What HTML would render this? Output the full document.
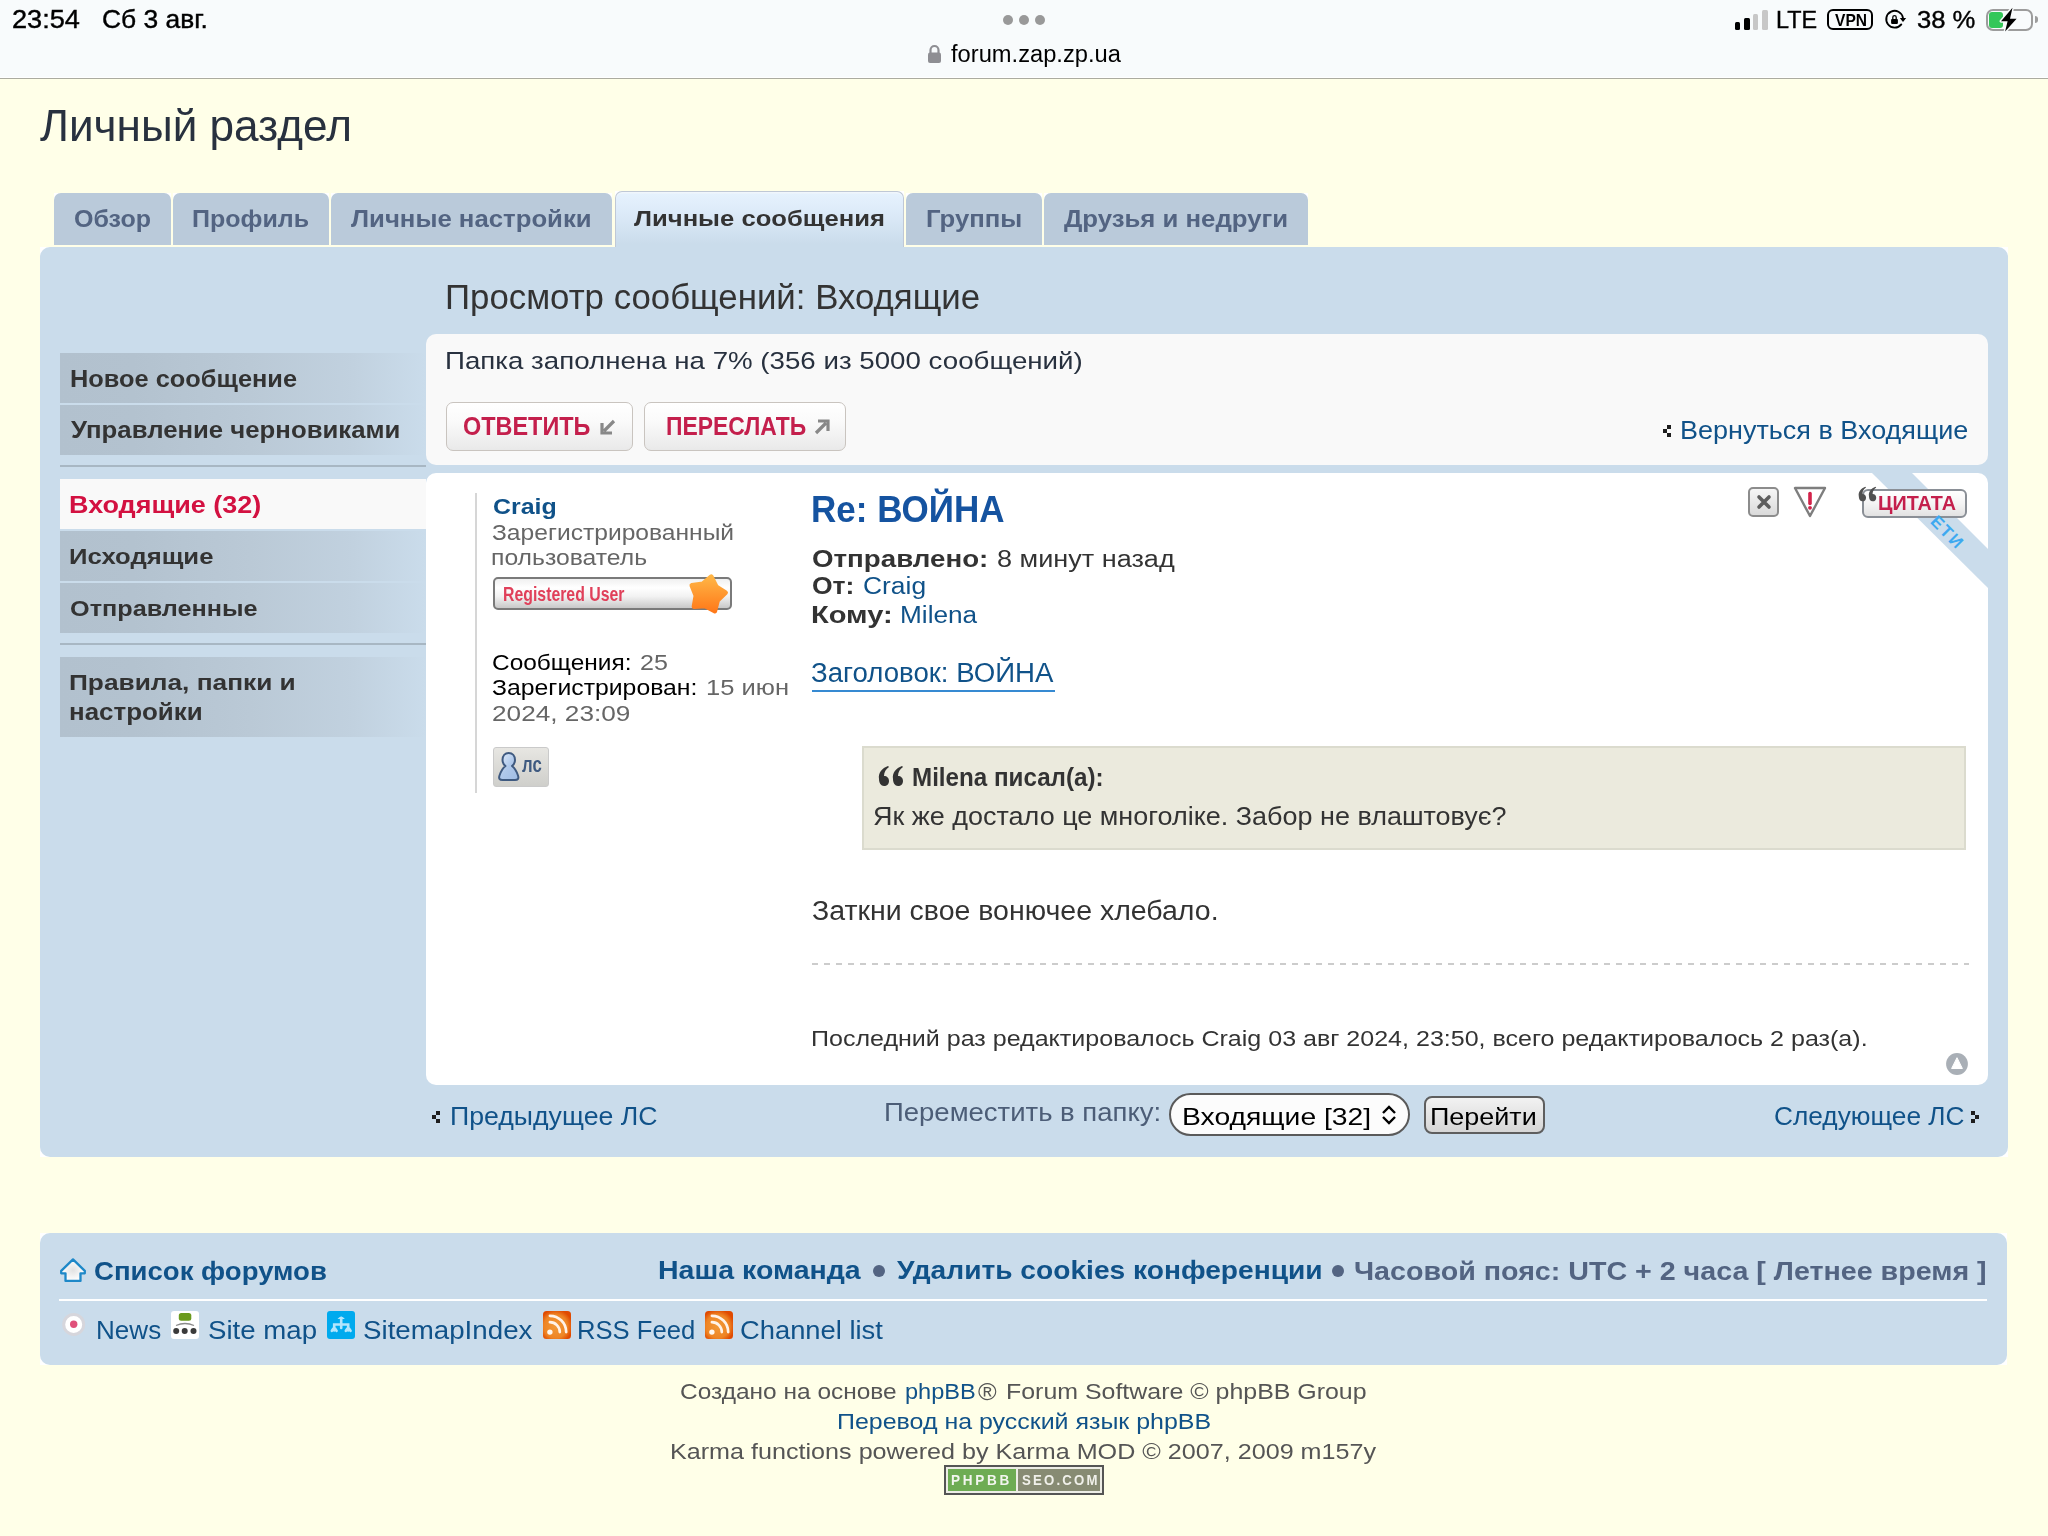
<!DOCTYPE html>
<html><head><meta charset="utf-8"><style>
html,body{margin:0;padding:0;width:2048px;height:1536px;overflow:hidden;background:#FFFFE8;font-family:'Liberation Sans', sans-serif;}
.t{position:absolute;white-space:nowrap;transform-origin:0 0;}
</style></head><body>
<div style="position:absolute;left:0px;top:0px;width:2048px;height:78px;background:#F8FBFC"></div>
<div style="position:absolute;left:0px;top:77px;width:2048px;height:1px;background:#FFFFFF"></div>
<div style="position:absolute;left:0px;top:78px;width:2048px;height:1.3px;background:#ABABA0"></div>
<div style="position:absolute;left:1003px;top:14.7px;width:10px;height:10px;background:#999;border-radius:50%"></div>
<div style="position:absolute;left:1019px;top:14.7px;width:10px;height:10px;background:#999;border-radius:50%"></div>
<div style="position:absolute;left:1035px;top:14.7px;width:10px;height:10px;background:#999;border-radius:50%"></div>
<svg style="position:absolute;left:927px;top:44px" width="15" height="20" viewBox="0 0 15 20"><path d="M3.5 9 V6 a4 4 0 0 1 8 0 V9" fill="none" stroke="#8E8E93" stroke-width="2.2"/><rect x="1" y="8.5" width="13" height="10.5" rx="2" fill="#8E8E93"/></svg>
<div style="position:absolute;left:1735.2px;top:21.6px;width:5.3px;height:8px;background:#000;border-radius:1.5px"></div>
<div style="position:absolute;left:1744.3px;top:18.4px;width:5.3px;height:11.2px;background:#000;border-radius:1.5px"></div>
<div style="position:absolute;left:1753.3px;top:14.1px;width:5.1px;height:15.5px;background:#C7C7C7;border-radius:1.5px"></div>
<div style="position:absolute;left:1762.4px;top:10.4px;width:5.2px;height:19.2px;background:#C7C7C7;border-radius:1.5px"></div>
<div style="position:absolute;left:1827.3px;top:8.8px;width:45.7px;height:21.3px;box-sizing:border-box;border:2.3px solid #000;border-radius:6px"></div>
<svg style="position:absolute;left:1880px;top:6px" width="32" height="28" viewBox="0 0 32 28"><path d="M21.3 18.4 A8.4 8.4 0 1 1 22.9 11.6" fill="none" stroke="#000" stroke-width="1.9" stroke-linecap="round"/><polygon points="19.8,12 26.2,12 23,16" fill="#000"/><rect x="11.1" y="13.1" width="6.8" height="4.8" rx="0.8" fill="#000"/><path d="M12.8 13.3 V11.3 A1.7 1.7 0 0 1 16.2 11.3 V13.3" fill="none" stroke="#000" stroke-width="1.3"/></svg>
<div style="position:absolute;left:1985.8px;top:8.5px;width:46.8px;height:22.5px;box-sizing:border-box;border:2.4px solid #9C9C9C;border-radius:7px"></div>
<div style="position:absolute;left:1989.1px;top:12.2px;width:14.4px;height:15.6px;background:#34C759;border-radius:3px"></div>
<div style="position:absolute;left:2035px;top:16.3px;width:3px;height:7px;background:#9C9C9C;border-radius:0 3px 3px 0"></div>
<svg style="position:absolute;left:1995px;top:4px" width="26" height="32" viewBox="0 0 26 32"><path d="M17.5 3.7 L6 17.2 H12.6 L10.1 27.5 L21.6 14.8 H15 Z" fill="#000" stroke="#F8FBFC" stroke-width="3" stroke-linejoin="round" paint-order="stroke"/></svg>
<div style="position:absolute;left:54px;top:193px;width:6px;height:6px;background:#FFFFFF"></div>
<div style="position:absolute;left:165px;top:193px;width:6px;height:6px;background:#FFFFFF"></div>
<div style="position:absolute;left:54px;top:193px;width:117px;height:52px;background:#BACADA;border-radius:7px 7px 0 0"></div>
<div style="position:absolute;left:173px;top:193px;width:6px;height:6px;background:#FFFFFF"></div>
<div style="position:absolute;left:323px;top:193px;width:6px;height:6px;background:#FFFFFF"></div>
<div style="position:absolute;left:173px;top:193px;width:156px;height:52px;background:#BACADA;border-radius:7px 7px 0 0"></div>
<div style="position:absolute;left:331px;top:193px;width:6px;height:6px;background:#FFFFFF"></div>
<div style="position:absolute;left:606px;top:193px;width:6px;height:6px;background:#FFFFFF"></div>
<div style="position:absolute;left:331px;top:193px;width:281px;height:52px;background:#BACADA;border-radius:7px 7px 0 0"></div>
<div style="position:absolute;left:906px;top:193px;width:6px;height:6px;background:#FFFFFF"></div>
<div style="position:absolute;left:1035.6px;top:193px;width:6px;height:6px;background:#FFFFFF"></div>
<div style="position:absolute;left:906px;top:193px;width:135.5999999999999px;height:52px;background:#BACADA;border-radius:7px 7px 0 0"></div>
<div style="position:absolute;left:1044.3px;top:193px;width:6px;height:6px;background:#FFFFFF"></div>
<div style="position:absolute;left:1301.8px;top:193px;width:6px;height:6px;background:#FFFFFF"></div>
<div style="position:absolute;left:1044.3px;top:193px;width:263.5px;height:52px;background:#BACADA;border-radius:7px 7px 0 0"></div>
<div style="position:absolute;left:614.5px;top:191px;width:7px;height:7px;background:#FFFFFF"></div>
<div style="position:absolute;left:896.5px;top:191px;width:7px;height:7px;background:#FFFFFF"></div>
<div style="position:absolute;left:614.5px;top:191px;width:289px;height:56px;box-sizing:border-box;border:1.5px solid #BFC8D6;border-bottom:none;background:linear-gradient(#E6F2FE,#DCEAF8 40%,#CADCEB 95%);border-radius:7px 7px 0 0;box-shadow:inset 0 1.5px 0 #F0F6FC"></div>
<div style="position:absolute;left:40px;top:247px;width:10px;height:10px;background:#FFFFFF"></div>
<div style="position:absolute;left:1998px;top:247px;width:10px;height:10px;background:#FFFFFF"></div>
<div style="position:absolute;left:40px;top:1147px;width:10px;height:10px;background:#FFFFFF"></div>
<div style="position:absolute;left:1998px;top:1147px;width:10px;height:10px;background:#FFFFFF"></div>
<div style="position:absolute;left:40px;top:247px;width:1968px;height:910px;background:#CADCEB;border-radius:10px"></div>
<div style="position:absolute;left:60px;top:353px;width:366px;height:50px;background:linear-gradient(90deg,#B2C1CE 0%,#B3C2CF 20%,#BAC9D6 52%,#C1D1DF 80%,#CADCEB 100%)"></div>
<div style="position:absolute;left:60px;top:405.2px;width:366px;height:49.80000000000001px;background:linear-gradient(90deg,#B2C1CE 0%,#B3C2CF 20%,#BAC9D6 52%,#C1D1DF 80%,#CADCEB 100%)"></div>
<div style="position:absolute;left:60px;top:465px;width:366px;height:2px;background:#A8B7C3"></div>
<div style="position:absolute;left:60px;top:479px;width:366px;height:50px;background:#F9F9F9"></div>
<div style="position:absolute;left:60px;top:530.8px;width:366px;height:49.90000000000009px;background:linear-gradient(90deg,#B2C1CE 0%,#B3C2CF 20%,#BAC9D6 52%,#C1D1DF 80%,#CADCEB 100%)"></div>
<div style="position:absolute;left:60px;top:582.6px;width:366px;height:50.10000000000002px;background:linear-gradient(90deg,#B2C1CE 0%,#B3C2CF 20%,#BAC9D6 52%,#C1D1DF 80%,#CADCEB 100%)"></div>
<div style="position:absolute;left:60px;top:643px;width:366px;height:2px;background:#A8B7C3"></div>
<div style="position:absolute;left:60px;top:657px;width:366px;height:79.5px;background:linear-gradient(90deg,#B2C1CE 0%,#B3C2CF 20%,#BAC9D6 52%,#C1D1DF 80%,#CADCEB 100%)"></div>
<div style="position:absolute;left:426px;top:334px;width:1562px;height:130.7px;background:#F9F9F9;border-radius:10px"></div>
<div style="position:absolute;left:446.4px;top:401.5px;width:187px;height:49px;box-sizing:border-box;border:1.5px solid #C9C4BF;border-radius:7px;background:linear-gradient(#FFFFFF,#FAFAFA 40%,#E9E9E9)"></div>
<div style="position:absolute;left:644.3px;top:401.5px;width:201.3px;height:49px;box-sizing:border-box;border:1.5px solid #C9C4BF;border-radius:7px;background:linear-gradient(#FFFFFF,#FAFAFA 40%,#E9E9E9)"></div>
<svg style="position:absolute;left:599px;top:418px" width="18" height="18" viewBox="0 0 18 18"><path d="M15 3 L5 13 M3 5 V15 H13" fill="none" stroke="#888" stroke-width="3.2"/></svg>
<svg style="position:absolute;left:813px;top:418px" width="18" height="18" viewBox="0 0 18 18"><path d="M3 15 L13 5 M5 3 H15 V13" fill="none" stroke="#888" stroke-width="3.2"/></svg>
<svg style="position:absolute;left:1663px;top:425px" width="8" height="12" viewBox="0 0 8 12"><rect x="4" y="0" width="4" height="4" fill="#1E1E1E"/><rect x="0" y="4" width="4" height="4" fill="#1E1E1E"/><rect x="4" y="8" width="4" height="4" fill="#1E1E1E"/></svg>
<div style="position:absolute;left:426px;top:473px;width:1562px;height:612.2px;background:#FFFFFF;border-radius:10px"></div>
<div style="position:absolute;left:426px;top:473px;width:1562px;height:612px;border-radius:10px;overflow:hidden"><svg style="position:absolute;left:0;top:0" width="1562" height="200"><polygon points="1446,0 1486,0 1562,76 1562,115" fill="#CADCEB"/></svg></div>
<div style="position:absolute;left:475px;top:493.2px;width:2px;height:299.5px;background:#D6D6D6"></div>
<div style="position:absolute;left:493.4px;top:576.8px;width:238.8px;height:33.5px;box-sizing:border-box;border:2px solid #7A7A7A;border-radius:5px;background:linear-gradient(#F0F0F0,#FFFFFF 30%,#F2F2F2 60%,#C9C9C9)"></div>
<svg style="position:absolute;left:680px;top:568px" width="56" height="52" viewBox="0 0 56 52"><defs><linearGradient id="sg" x1="0" y1="0" x2="0" y2="1"><stop offset="0" stop-color="#FFB545"/><stop offset="1" stop-color="#FF7A1A"/></linearGradient></defs><polygon points="31.3,8.6 36.3,18.6 45.7,24.6 37.7,32.4 34.9,43.2 25.0,38.0 13.9,38.7 15.8,27.7 11.7,17.3 22.7,15.7" fill="url(#sg)" stroke="url(#sg)" stroke-width="4.5" stroke-linejoin="round"/></svg>
<div style="position:absolute;left:493.1px;top:747px;width:55.7px;height:39.8px;box-sizing:border-box;border:1px solid #CACACA;background:linear-gradient(#E7E6E2,#CFCFCB);border-radius:3px"></div>
<svg style="position:absolute;left:496px;top:750px" width="26" height="32" viewBox="0 0 26 32"><defs><linearGradient id="pg" x1="0" y1="0" x2="1" y2="1"><stop offset="0" stop-color="#E6F0FC"/><stop offset="0.5" stop-color="#AFC8EA"/><stop offset="1" stop-color="#9FBCE4"/></linearGradient></defs><path d="M6.5 30 C3.5 30 2.5 28.5 3.5 25.5 C5 21 7.5 17.5 9.5 16 C7.5 14.5 6.5 12.5 6.5 10 C6.5 6 9 3 12.7 3 C16.4 3 19 6 19 10 C19 12.5 18 14.5 16 16 C18 17.5 20.5 21 22 25.5 C23 28.5 22 30 19 30 Z" fill="url(#pg)" stroke="#3F5A80" stroke-width="2" stroke-linejoin="round"/></svg>
<div style="position:absolute;left:1748px;top:486.8px;width:31.3px;height:29.9px;box-sizing:border-box;border:2px solid #8C8C8C;border-radius:5px;background:linear-gradient(#F6F6F6,#DADADA)"></div>
<svg style="position:absolute;left:1755px;top:493px" width="18" height="18" viewBox="0 0 18 18"><path d="M4 4 L14 14 M14 4 L4 14" stroke="#5E5E5E" stroke-width="3.6" stroke-linecap="round"/></svg>
<svg style="position:absolute;left:1792px;top:485px" width="36" height="34" viewBox="0 0 36 34"><path d="M3 3 H33 L18 31 Z" fill="#FFF" stroke="#7E7E7E" stroke-width="2.4" stroke-linejoin="round"/><path d="M18 8.5 V18.5" stroke="#D3224A" stroke-width="3.6" stroke-linecap="round"/><circle cx="18" cy="22.8" r="1.9" fill="#D3224A"/></svg>
<div style="position:absolute;left:1861.9px;top:489.1px;width:105.4px;height:29.3px;box-sizing:border-box;border:2px solid #8A8F96;border-radius:6px;background:linear-gradient(#FFFFFF,#F4F4F4 50%,#E2E2E2)"></div>
<svg style="position:absolute;left:1857px;top:486px" width="21" height="16" viewBox="0 0 28 22"><path d="M11 1 C5 3 1 8 2 14 C2 18 4 21 7 21 C10 21 12 19 12 16 C12 13 10 11 7 11 C7 7 9 4 12 2 Z M25 1 C19 3 15 8 16 14 C16 18 18 21 21 21 C24 21 26 19 26 16 C26 13 24 11 21 11 C21 7 23 4 26 2 Z" fill="#505050"/></svg>
<div style="position:absolute;left:1940px;top:512px;letter-spacing:2px;font:bold 17px 'Liberation Sans';color:#3DA9F0;transform:rotate(45deg);transform-origin:0 0;white-space:nowrap">ЕТИ</div>
<div style="position:absolute;left:812px;top:690px;width:243px;height:2px;background:#368AD2"></div>
<div style="position:absolute;left:862px;top:746px;width:1104px;height:104px;box-sizing:border-box;border:2px solid #DBDBCE;background:#EBEADD"></div>
<svg style="position:absolute;left:877px;top:765px" width="28" height="22" viewBox="0 0 28 22"><path d="M11 1 C5 3 1 8 2 14 C2 18 4 21 7 21 C10 21 12 19 12 16 C12 13 10 11 7 11 C7 7 9 4 12 2 Z M25 1 C19 3 15 8 16 14 C16 18 18 21 21 21 C24 21 26 19 26 16 C26 13 24 11 21 11 C21 7 23 4 26 2 Z" fill="#333"/></svg>
<div style="position:absolute;left:811.5px;top:963px;width:1157px;height:2px;background:repeating-linear-gradient(90deg,#CCCCCC 0 6px,transparent 6px 12px)"></div>
<svg style="position:absolute;left:1946px;top:1053px" width="22" height="22" viewBox="0 0 22 22"><circle cx="11" cy="11" r="10.9" fill="#A9AFB6"/><path d="M11 4.7 L5.6 15.5 H16.4 Z" fill="#FFF" stroke="#FFF" stroke-width="1" stroke-linejoin="round"/></svg>
<svg style="position:absolute;left:432px;top:1111.3px" width="8" height="12" viewBox="0 0 8 12"><rect x="4" y="0" width="4" height="4" fill="#1E1E1E"/><rect x="0" y="4" width="4" height="4" fill="#1E1E1E"/><rect x="4" y="8" width="4" height="4" fill="#1E1E1E"/></svg>
<div style="position:absolute;left:1169.4px;top:1093.4px;width:241px;height:43px;box-sizing:border-box;border:2px solid #5A5A5A;border-radius:22px;background:#FCFCFC"></div>
<svg style="position:absolute;left:1380px;top:1105px" width="18" height="20" viewBox="0 0 18 20"><path d="M3 8 L9 2 L15 8 M3 12 L9 18 L15 12" fill="none" stroke="#000" stroke-width="2.4"/></svg>
<div style="position:absolute;left:1424.3px;top:1095.8px;width:120.6px;height:38.7px;box-sizing:border-box;border:2px solid #5E5E5E;border-radius:8px;background:linear-gradient(#F2F2F2,#D6D6D6)"></div>
<svg style="position:absolute;left:1971px;top:1111px" width="8" height="12" viewBox="0 0 8 12"><rect x="0" y="0" width="4" height="4" fill="#1E1E1E"/><rect x="4" y="4" width="4" height="4" fill="#1E1E1E"/><rect x="0" y="8" width="4" height="4" fill="#1E1E1E"/></svg>
<div style="position:absolute;left:40px;top:1233.2px;width:10px;height:10px;background:#FFFFFF"></div>
<div style="position:absolute;left:1997px;top:1233.2px;width:10px;height:10px;background:#FFFFFF"></div>
<div style="position:absolute;left:40px;top:1355.0px;width:10px;height:10px;background:#FFFFFF"></div>
<div style="position:absolute;left:1997px;top:1355.0px;width:10px;height:10px;background:#FFFFFF"></div>
<div style="position:absolute;left:40px;top:1233.2px;width:1967px;height:131.8px;background:#CADCEB;border-radius:10px"></div>
<svg style="position:absolute;left:59px;top:1257px" width="28" height="26" viewBox="0 0 28 26"><defs><radialGradient id="hg" cx="0.5" cy="0.5" r="0.5"><stop offset="0" stop-color="#E2E2E2"/><stop offset="1" stop-color="#FFFFFF"/></radialGradient></defs><path d="M14 2.4 L2.2 13.8 V16.3 H6.5 V23.9 H21.5 V16.3 H25.8 V13.8 Z" fill="url(#hg)" stroke="#1E88C8" stroke-width="2.3" stroke-linejoin="round"/></svg>
<div style="position:absolute;left:873.1px;top:1265.2px;width:11.8px;height:11.8px;background:#536482;border-radius:50%"></div>
<div style="position:absolute;left:1332px;top:1265.2px;width:11.8px;height:11.8px;background:#536482;border-radius:50%"></div>
<div style="position:absolute;left:59.3px;top:1299px;width:1927.6px;height:2px;background:#FFFFFF"></div>
<svg style="position:absolute;left:61px;top:1312px" width="26" height="26" viewBox="0 0 26 26"><circle cx="12.7" cy="12.4" r="10" fill="#FFFFFF" stroke="#D6D6DC" stroke-width="3"/><circle cx="12.7" cy="12.2" r="3.7" fill="#E0507A"/></svg>
<svg style="position:absolute;left:171px;top:1311px" width="28" height="28" viewBox="0 0 28 28"><rect x="0" y="0" width="28" height="28" rx="3" fill="#FFFFFF"/><rect x="7.8" y="2" width="12.5" height="7.8" rx="2.5" fill="#6A9A1E"/><path d="M5 14.5 Q14 10.5 23 14.5" stroke="#8A8A8A" stroke-width="1.3" fill="none"/><circle cx="5.2" cy="20" r="3" fill="#3A3A3A"/><circle cx="13.7" cy="20" r="3" fill="#3A3A3A"/><circle cx="22.5" cy="20" r="3" fill="#3A3A3A"/></svg>
<svg style="position:absolute;left:327px;top:1311px" width="28" height="28" viewBox="0 0 28 28"><rect x="0" y="0" width="28" height="28" rx="3" fill="#00AAEE"/><g stroke="#B3E5FC" stroke-width="2.6" fill="none" stroke-linecap="round"><path d="M14.2 7 V17"/><path d="M7.2 19.5 V13.5 H21.2 V19.5"/><path d="M4.8 19.8 Q7.2 15 9.6 19.8"/><path d="M18.8 19.8 Q21.2 15 23.6 19.8"/></g><path d="M10.5 8 Q14.2 3 17.9 8 Z" fill="#B3E5FC"/></svg>
<svg style="position:absolute;left:543px;top:1311px" width="28" height="28" viewBox="0 0 28 28"><defs><radialGradient id="rg543" cx="0.45" cy="0.55" r="0.6"><stop offset="0" stop-color="#F29A38"/><stop offset="0.7" stop-color="#EE8424"/><stop offset="1" stop-color="#E04A00"/></radialGradient></defs><rect x="0" y="0" width="28" height="28" rx="3.5" fill="url(#rg543)"/><circle cx="6.9" cy="21.1" r="2.7" fill="#FFF8F0"/><path d="M6.9 11.2 A9.9 9.9 0 0 1 16.8 21.1" fill="none" stroke="#FFF3E8" stroke-width="2.7" stroke-linecap="round"/><path d="M6.9 4.8 A16.3 16.3 0 0 1 23.2 21.1" fill="none" stroke="#FFF3E8" stroke-width="2.7" stroke-linecap="round"/></svg>
<svg style="position:absolute;left:705px;top:1311px" width="28" height="28" viewBox="0 0 28 28"><defs><radialGradient id="rg705" cx="0.45" cy="0.55" r="0.6"><stop offset="0" stop-color="#F29A38"/><stop offset="0.7" stop-color="#EE8424"/><stop offset="1" stop-color="#E04A00"/></radialGradient></defs><rect x="0" y="0" width="28" height="28" rx="3.5" fill="url(#rg705)"/><circle cx="6.9" cy="21.1" r="2.7" fill="#FFF8F0"/><path d="M6.9 11.2 A9.9 9.9 0 0 1 16.8 21.1" fill="none" stroke="#FFF3E8" stroke-width="2.7" stroke-linecap="round"/><path d="M6.9 4.8 A16.3 16.3 0 0 1 23.2 21.1" fill="none" stroke="#FFF3E8" stroke-width="2.7" stroke-linecap="round"/></svg>
<div style="position:absolute;left:944.2px;top:1465.1px;width:159.7px;height:29.6px;box-sizing:border-box;border:2px solid #555555;background:#EDEDE6"></div>
<div style="position:absolute;left:948.3px;top:1469.1px;width:67.7px;height:21.6px;background:#6EAC53"></div>
<div style="position:absolute;left:1018.4px;top:1469.1px;width:81.4px;height:21.6px;background:#878B73"></div>
<div class="t" style="left:12.03px;top:7.14px;font-size:25.00px;line-height:25.00px;font-weight:normal;color:#000;transform:scaleX(1.0861);letter-spacing:0px;-webkit-text-stroke:0.4px #000;">23:54</div>
<div class="t" style="left:101.76px;top:7.14px;font-size:25.00px;line-height:25.00px;font-weight:normal;color:#000;transform:scaleX(1.0553);letter-spacing:0px;-webkit-text-stroke:0.4px #000;">Сб 3 авг.</div>
<div class="t" style="left:951.40px;top:41.64px;font-size:24.29px;line-height:24.29px;font-weight:normal;color:#000;transform:scaleX(0.9759);letter-spacing:0px;">forum.zap.zp.ua</div>
<div class="t" style="left:1775.88px;top:7.54px;font-size:24.29px;line-height:24.29px;font-weight:normal;color:#000;transform:scaleX(0.9618);letter-spacing:0px;-webkit-text-stroke:0.4px #000;">LTE</div>
<div class="t" style="left:1834.50px;top:11.59px;font-size:16.43px;line-height:16.43px;font-weight:bold;color:#000;transform:scaleX(0.9481);letter-spacing:0px;">VPN</div>
<div class="t" style="left:1917.00px;top:7.54px;font-size:24.29px;line-height:24.29px;font-weight:normal;color:#000;transform:scaleX(1.0543);letter-spacing:0px;-webkit-text-stroke:0.4px #000;">38 %</div>
<div class="t" style="left:40.40px;top:103.07px;font-size:45.28px;line-height:45.28px;font-weight:normal;color:#28313F;transform:scaleX(0.9745);letter-spacing:0px;">Личный раздел</div>
<div class="t" style="left:74.22px;top:207.61px;font-size:23.14px;line-height:23.14px;font-weight:bold;color:#536482;transform:scaleX(1.0816);letter-spacing:0px;">Обзор</div>
<div class="t" style="left:192.44px;top:207.61px;font-size:23.14px;line-height:23.14px;font-weight:bold;color:#536482;transform:scaleX(1.0819);letter-spacing:0px;">Профиль</div>
<div class="t" style="left:351.00px;top:207.61px;font-size:23.14px;line-height:23.14px;font-weight:bold;color:#536482;transform:scaleX(1.1134);letter-spacing:0px;">Личные настройки</div>
<div class="t" style="left:925.79px;top:207.61px;font-size:23.14px;line-height:23.14px;font-weight:bold;color:#536482;transform:scaleX(1.1109);letter-spacing:0px;">Группы</div>
<div class="t" style="left:1064.30px;top:207.61px;font-size:23.14px;line-height:23.14px;font-weight:bold;color:#536482;transform:scaleX(1.1139);letter-spacing:0px;">Друзья и недруги</div>
<div class="t" style="left:633.50px;top:207.94px;font-size:22.29px;line-height:22.29px;font-weight:bold;color:#333333;transform:scaleX(1.1506);letter-spacing:0px;">Личные сообщения</div>
<div class="t" style="left:444.88px;top:279.44px;font-size:35.28px;line-height:35.28px;font-weight:normal;color:#333333;transform:scaleX(0.9870);letter-spacing:0px;">Просмотр сообщений: Входящие</div>
<div class="t" style="left:69.81px;top:367.61px;font-size:23.14px;line-height:23.14px;font-weight:bold;color:#333333;transform:scaleX(1.0970);letter-spacing:0px;">Новое сообщение</div>
<div class="t" style="left:71.40px;top:418.61px;font-size:23.14px;line-height:23.14px;font-weight:bold;color:#333333;transform:scaleX(1.1136);letter-spacing:0px;">Управление черновиками</div>
<div class="t" style="left:69.31px;top:493.53px;font-size:23.00px;line-height:23.00px;font-weight:bold;color:#D31141;transform:scaleX(1.1729);letter-spacing:0px;">Входящие (32)</div>
<div class="t" style="left:69.39px;top:546.14px;font-size:22.29px;line-height:22.29px;font-weight:bold;color:#333333;transform:scaleX(1.1526);letter-spacing:0px;">Исходящие</div>
<div class="t" style="left:70.21px;top:598.30px;font-size:21.86px;line-height:21.86px;font-weight:bold;color:#333333;transform:scaleX(1.1543);letter-spacing:0px;">Отправленные</div>
<div class="t" style="left:69.36px;top:672.32px;font-size:21.71px;line-height:21.71px;font-weight:bold;color:#333333;transform:scaleX(1.2098);letter-spacing:0px;">Правила, папки и</div>
<div class="t" style="left:69.38px;top:700.93px;font-size:23.00px;line-height:23.00px;font-weight:bold;color:#333333;transform:scaleX(1.1269);letter-spacing:0px;">настройки</div>
<div class="t" style="left:445.44px;top:349.20px;font-size:24.57px;line-height:24.57px;font-weight:normal;color:#28313F;transform:scaleX(1.1274);letter-spacing:0px;">Папка заполнена на 7% (356 из 5000 сообщений)</div>
<div class="t" style="left:462.97px;top:413.52px;font-size:25.14px;line-height:25.14px;font-weight:bold;color:#C41F4C;transform:scaleX(0.9324);letter-spacing:0px;">ОТВЕТИТЬ</div>
<div class="t" style="left:666.27px;top:413.52px;font-size:25.14px;line-height:25.14px;font-weight:bold;color:#C41F4C;transform:scaleX(0.9114);letter-spacing:0px;">ПЕРЕСЛАТЬ</div>
<div class="t" style="left:1679.79px;top:417.90px;font-size:25.29px;line-height:25.29px;font-weight:normal;color:#105289;transform:scaleX(1.0676);letter-spacing:0px;">Вернуться в Входящие</div>
<div class="t" style="left:493.12px;top:495.69px;font-size:22.57px;line-height:22.57px;font-weight:bold;color:#105289;transform:scaleX(1.1054);letter-spacing:0px;">Craig</div>
<div class="t" style="left:492.23px;top:522.38px;font-size:22.00px;line-height:22.00px;font-weight:normal;color:#666666;transform:scaleX(1.1185);letter-spacing:0px;">Зарегистрированный</div>
<div class="t" style="left:491.45px;top:547.25px;font-size:22.50px;line-height:22.50px;font-weight:normal;color:#666666;transform:scaleX(1.0988);letter-spacing:0px;">пользователь</div>
<div class="t" style="left:503.01px;top:584.55px;font-size:19.43px;line-height:19.43px;font-weight:bold;color:#E0405A;transform:scaleX(0.8154);letter-spacing:0px;filter:blur(0.4px);">Registered User</div>
<div class="t" style="left:492.05px;top:651.71px;font-size:22.43px;line-height:22.43px;font-weight:normal;color:#000000;transform:scaleX(1.0899);letter-spacing:0px;">Сообщения:</div>
<div class="t" style="left:639.82px;top:651.71px;font-size:22.43px;line-height:22.43px;font-weight:normal;color:#666666;transform:scaleX(1.1180);letter-spacing:0px;">25</div>
<div class="t" style="left:492.43px;top:677.41px;font-size:22.43px;line-height:22.43px;font-weight:normal;color:#000000;transform:scaleX(1.1057);letter-spacing:0px;">Зарегистрирован:</div>
<div class="t" style="left:705.70px;top:677.41px;font-size:22.43px;line-height:22.43px;font-weight:normal;color:#666666;transform:scaleX(1.1387);letter-spacing:0px;">15 июн</div>
<div class="t" style="left:491.97px;top:703.21px;font-size:22.43px;line-height:22.43px;font-weight:normal;color:#666666;transform:scaleX(1.1680);letter-spacing:0px;">2024, 23:09</div>
<div class="t" style="left:521.80px;top:754.08px;font-size:22.00px;line-height:22.00px;font-weight:bold;color:#3F5A80;transform:scaleX(0.7606);letter-spacing:0px;">лс</div>
<div class="t" style="left:811.11px;top:491.16px;font-size:37.14px;line-height:37.14px;font-weight:bold;color:#1553A0;transform:scaleX(0.9433);letter-spacing:0px;">Re: ВОЙНА</div>
<div class="t" style="left:812.43px;top:547.55px;font-size:23.57px;line-height:23.57px;font-weight:bold;color:#333333;transform:scaleX(1.1753);letter-spacing:0px;">Отправлено:</div>
<div class="t" style="left:997.35px;top:547.55px;font-size:23.57px;line-height:23.57px;font-weight:normal;color:#333333;transform:scaleX(1.1492);letter-spacing:0px;">8 минут назад</div>
<div class="t" style="left:812.47px;top:575.25px;font-size:23.57px;line-height:23.57px;font-weight:bold;color:#333333;transform:scaleX(1.1246);letter-spacing:0px;">От:</div>
<div class="t" style="left:862.76px;top:575.25px;font-size:23.57px;line-height:23.57px;font-weight:normal;color:#105289;transform:scaleX(1.1206);letter-spacing:0px;">Craig</div>
<div class="t" style="left:811.48px;top:603.65px;font-size:23.57px;line-height:23.57px;font-weight:bold;color:#333333;transform:scaleX(1.2337);letter-spacing:0px;">Кому:</div>
<div class="t" style="left:899.95px;top:603.65px;font-size:23.57px;line-height:23.57px;font-weight:normal;color:#105289;transform:scaleX(1.1115);letter-spacing:0px;">Milena</div>
<div class="t" style="left:1878.16px;top:494.49px;font-size:19.86px;line-height:19.86px;font-weight:bold;color:#C41F4C;transform:scaleX(0.9960);letter-spacing:0px;">ЦИТАТА</div>
<div class="t" style="left:811.34px;top:658.03px;font-size:28.19px;line-height:28.19px;font-weight:normal;color:#105289;transform:scaleX(0.9797);letter-spacing:0px;">Заголовок: ВОЙНА</div>
<div class="t" style="left:912.49px;top:765.26px;font-size:24.86px;line-height:24.86px;font-weight:bold;color:#333333;transform:scaleX(0.9723);letter-spacing:0px;">Milena писал(а):</div>
<div class="t" style="left:872.93px;top:803.46px;font-size:26.39px;line-height:26.39px;font-weight:normal;color:#333333;transform:scaleX(1.0229);letter-spacing:0px;">Як же достало це многоліке. Забор не влаштовує?</div>
<div class="t" style="left:811.61px;top:896.22px;font-size:28.33px;line-height:28.33px;font-weight:normal;color:#333333;transform:scaleX(1.0063);letter-spacing:0px;">Заткни свое вонючее хлебало.</div>
<div class="t" style="left:810.74px;top:1027.84px;font-size:22.29px;line-height:22.29px;font-weight:normal;color:#333333;transform:scaleX(1.1237);letter-spacing:0px;">Последний раз редактировалось Craig 03 авг 2024, 23:50, всего редактировалось 2 раз(а).</div>
<div class="t" style="left:449.61px;top:1103.56px;font-size:24.86px;line-height:24.86px;font-weight:normal;color:#105289;transform:scaleX(1.0737);letter-spacing:0px;">Предыдущее ЛС</div>
<div class="t" style="left:883.55px;top:1100.46px;font-size:24.86px;line-height:24.86px;font-weight:normal;color:#4C5D77;transform:scaleX(1.1061);letter-spacing:0px;">Переместить в папку:</div>
<div class="t" style="left:1181.59px;top:1104.88px;font-size:24.00px;line-height:24.00px;font-weight:normal;color:#000000;transform:scaleX(1.1788);letter-spacing:0px;">Входящие [32]</div>
<div class="t" style="left:1430.30px;top:1104.88px;font-size:24.00px;line-height:24.00px;font-weight:normal;color:#000000;transform:scaleX(1.1218);letter-spacing:0px;">Перейти</div>
<div class="t" style="left:1773.87px;top:1103.56px;font-size:24.86px;line-height:24.86px;font-weight:normal;color:#105289;transform:scaleX(1.0568);letter-spacing:0px;">Следующее ЛС</div>
<div class="t" style="left:94.14px;top:1259.25px;font-size:25.57px;line-height:25.57px;font-weight:bold;color:#105289;transform:scaleX(1.0780);letter-spacing:0px;">Список форумов</div>
<div class="t" style="left:657.52px;top:1257.49px;font-size:26.00px;line-height:26.00px;font-weight:bold;color:#105289;transform:scaleX(1.0968);letter-spacing:0px;">Наша команда</div>
<div class="t" style="left:896.60px;top:1257.49px;font-size:26.00px;line-height:26.00px;font-weight:bold;color:#105289;transform:scaleX(1.0827);letter-spacing:0px;">Удалить cookies конференции</div>
<div class="t" style="left:1354.26px;top:1257.59px;font-size:26.00px;line-height:26.00px;font-weight:bold;color:#536482;transform:scaleX(1.1013);letter-spacing:0px;">Часовой пояс: UTC + 2 часа [ Летнее время ]</div>
<div class="t" style="left:96.06px;top:1317.86px;font-size:24.86px;line-height:24.86px;font-weight:normal;color:#105289;transform:scaleX(1.0482);letter-spacing:0px;">News</div>
<div class="t" style="left:207.74px;top:1317.86px;font-size:24.86px;line-height:24.86px;font-weight:normal;color:#105289;transform:scaleX(1.1110);letter-spacing:0px;">Site map</div>
<div class="t" style="left:362.63px;top:1317.86px;font-size:24.86px;line-height:24.86px;font-weight:normal;color:#105289;transform:scaleX(1.1143);letter-spacing:0px;">SitemapIndex</div>
<div class="t" style="left:577.30px;top:1317.86px;font-size:24.86px;line-height:24.86px;font-weight:normal;color:#105289;transform:scaleX(1.0302);letter-spacing:0px;">RSS Feed</div>
<div class="t" style="left:740.12px;top:1317.86px;font-size:24.86px;line-height:24.86px;font-weight:normal;color:#105289;transform:scaleX(1.0994);letter-spacing:0px;">Channel list</div>
<div class="t" style="left:680.45px;top:1379.65px;font-size:22.86px;line-height:22.86px;font-weight:normal;color:#555555;transform:scaleX(1.0702);letter-spacing:0px;">Создано на основе</div>
<div class="t" style="left:905.43px;top:1379.65px;font-size:22.86px;line-height:22.86px;font-weight:normal;color:#105289;transform:scaleX(1.0311);letter-spacing:0px;">phpBB</div>
<div class="t" style="left:978.10px;top:1380.18px;font-size:24.00px;line-height:24.00px;font-weight:normal;color:#555555;transform:scaleX(1.0553);letter-spacing:0px;">®</div>
<div class="t" style="left:1005.95px;top:1379.65px;font-size:22.86px;line-height:22.86px;font-weight:normal;color:#555555;transform:scaleX(1.0905);letter-spacing:0px;">Forum Software © phpBB Group</div>
<div class="t" style="left:836.55px;top:1410.05px;font-size:22.86px;line-height:22.86px;font-weight:normal;color:#105289;transform:scaleX(1.0917);letter-spacing:0px;">Перевод на русский язык phpBB</div>
<div class="t" style="left:669.54px;top:1439.65px;font-size:22.86px;line-height:22.86px;font-weight:normal;color:#555555;transform:scaleX(1.0998);letter-spacing:0px;">Karma functions powered by Karma MOD © 2007, 2009 m157y</div>
<div class="t" style="left:950.75px;top:1472.30px;font-size:15.00px;line-height:15.00px;font-weight:bold;color:#F2F5EE;transform:scaleX(0.9025);letter-spacing:3px;">PHPBB</div>
<div class="t" style="left:1021.59px;top:1472.30px;font-size:15.00px;line-height:15.00px;font-weight:bold;color:#F0F0EA;transform:scaleX(0.8806);letter-spacing:2.5px;">SEO.COM</div>
</body></html>
